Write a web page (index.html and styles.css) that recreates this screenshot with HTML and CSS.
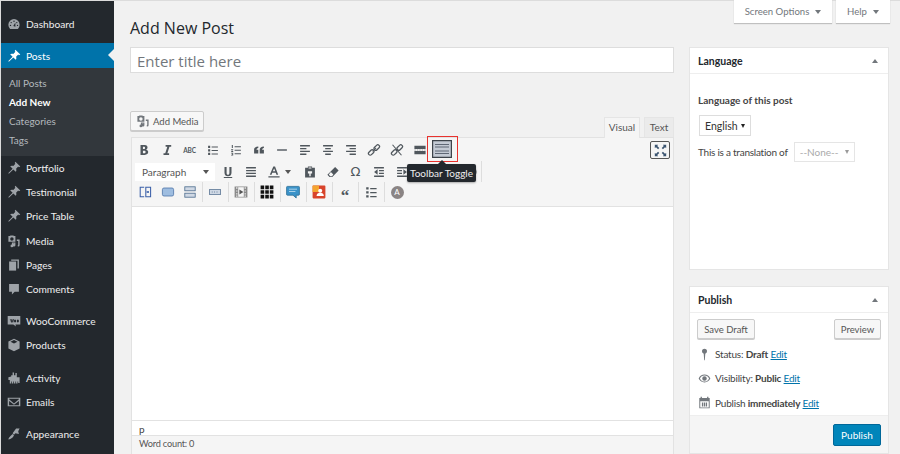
FILE: index.html
```html
<!DOCTYPE html>
<html lang="en">
<head>
<meta charset="utf-8">
<title>Add New Post</title>
<link rel="stylesheet" href="styles.css">
</head>
<body>
<div class="page">
<nav class="side">
  <a class="item first"><svg class="mi" viewBox="0 0 20 20"><path d="M10 3a8 8 0 0 0-8 8c0 2.500 1 4.500 2.500 6h11c1.500-1.500 2.500-3.500 2.500-6a8 8 0 0 0-8-8z"/><g fill="#23282d"><circle cx="6" cy="8" r="1"/><circle cx="10" cy="6" r="1"/><circle cx="14" cy="8" r="1"/><circle cx="5" cy="12" r="1"/><circle cx="15" cy="12" r="1"/><path d="M9 13l3-5 0 6z"/></g></svg>Dashboard</a>
  <a class="item active"><svg class="mi" viewBox="0 0 20 20"><path d="M12 1l7 7-2 1-1-1-3 3c.7 2 .4 3.500-.5 4.500L9 12l-6 6-1 0 0-1 6-6-3.500-3.500C5.500 6.600 7 6.300 9 7l3-3-1-1z"/></svg>Posts<span class="notch"></span></a>
  <div class="sub">
    <a>All Posts</a>
    <a class="on">Add New</a>
    <a>Categories</a>
    <a>Tags</a>
  </div>
  <a class="item"><svg class="mi" viewBox="0 0 20 20"><path d="M12 1l7 7-2 1-1-1-3 3c.7 2 .4 3.500-.5 4.500L9 12l-6 6-1 0 0-1 6-6-3.500-3.500C5.500 6.600 7 6.300 9 7l3-3-1-1z"/></svg>Portfolio</a>
  <a class="item"><svg class="mi" viewBox="0 0 20 20"><path d="M12 1l7 7-2 1-1-1-3 3c.7 2 .4 3.500-.5 4.500L9 12l-6 6-1 0 0-1 6-6-3.500-3.500C5.500 6.600 7 6.300 9 7l3-3-1-1z"/></svg>Testimonial</a>
  <a class="item"><svg class="mi" viewBox="0 0 20 20"><path d="M12 1l7 7-2 1-1-1-3 3c.7 2 .4 3.500-.5 4.500L9 12l-6 6-1 0 0-1 6-6-3.500-3.500C5.500 6.600 7 6.300 9 7l3-3-1-1z"/></svg>Price Table</a>
  <a class="item"><svg class="mi" viewBox="0 0 20 20"><path d="M2 3h2l1-1h4l1 1h2v8H2zm5 1.500a2.500 2.500 0 1 0 0 5 2.500 2.500 0 0 0 0-5z"/><path d="M14 8h4v8a2 2 0 0 1-2 2l-1-1 1-1.500V10h-2zM7 12h5v4a2 2 0 1 1-1.500-2V13.500H9V17a2 2 0 1 1-2-2z"/></svg>Media</a>
  <a class="item"><svg class="mi" viewBox="0 0 20 20"><path d="M6 2h11v13h-2V4H6z"/><path d="M3 5h10v13H3z"/></svg>Pages</a>
  <a class="item"><svg class="mi" viewBox="0 0 20 20"><path d="M3 3h14v11h-6l-4 4v-4H3z"/></svg>Comments</a>
  <a class="item gap"><svg class="mi" viewBox="0 0 20 20"><path d="M1 3h18v12H12l1 3-4-3H1z"/><path fill="#23282d" d="M4 7h1l.7 3 .8-3h1l.8 3 .7-3h1l-1.200 5h-1l-.8-2.800L7 12H6zm7.500 1a1.500 2 0 1 0 .01 0zm4 0a1.500 2 0 1 0 .01 0z"/></svg>WooCommerce</a>
  <a class="item"><svg class="mi" viewBox="0 0 20 20"><path d="M10 1l8 4v10l-8 4-8-4V5zM10 3L5 5.500 10 8l5-2.500z"/></svg>Products</a>
  <a class="item gap"><svg class="mi" viewBox="0 0 20 20"><path d="M8 2h2v4h2V3h2v6h4v8h-2v-2h-1v3h-2v-3h-1v3h-2v-3H9v3H7v-3H6v3H4v-5H2V9l4-1V6h2z"/></svg>Activity</a>
  <a class="item"><svg class="mi" viewBox="0 0 20 20"><path d="M1 4h18v12H1zm2 2l7 6 7-6v-.500H3zm0 2.500V14.500h14V8.500l-7 5.500z"/></svg>Emails</a>
  <a class="item gap"><svg class="mi" viewBox="0 0 20 20"><path d="M13 2l5 0-2 4 1 4-5-1-2 2-2-2zM8 10l2 2-2 3c-1 1-4 3-6 3 0-2 2-4 3-5z"/></svg>Appearance</a>
</nav>

<div class="work">
  <div class="tabs">
    <button class="tab">Screen Options<span class="down"></span></button>
    <button class="tab">Help<span class="down"></span></button>
  </div>
  <h1>Add New Post</h1>
  <div class="cols">
    <main class="body">
      <div class="title">Enter title here</div>
      <div class="bar">
        <button class="btn media"><svg class="ic16" viewBox="0 0 20 20"><path d="M2 3h2l1-1h4l1 1h2v8H2zm5 1.500a2.500 2.500 0 1 0 0 5 2.500 2.500 0 0 0 0-5z"/><path d="M14 8h4v8a2 2 0 0 1-2 2l-1-1 1-1.500V10h-2zM7 12h5v4a2 2 0 1 1-1.500-2V13.500H9V17a2 2 0 1 1-2-2z"/></svg>Add Media</button>
        <div class="modes"><span class="mode sel">Visual</span><span class="mode tx">Text</span></div>
      </div>
      <div class="editor">
        <div class="tools">
          <div class="row r1">
            <span class="t"><svg viewBox="0 0 20 20"><path d="M5 3h6c3 0 4 1.500 4 3.500 0 1.500-.8 2.500-2 3 1.700.4 3 1.500 3 3.500 0 2.500-2 4-5 4H5zm3.500 2.500v3H10c1 0 1.500-.6 1.500-1.500S11 5.500 10 5.500zm0 5.500v3.500h2c1 0 1.800-.6 1.800-1.800S11.500 11 10.500 11z"/></svg></span>
            <span class="t"><svg viewBox="0 0 20 20"><path d="M8 3h8v2.500h-2.500L10.500 14.500H13V17H5v-2.500h2.500L10.500 5.500H8z"/></svg></span>
            <span class="t"><span class="abc">ABC</span></span>
            <span class="t"><svg viewBox="0 0 20 20"><path d="M3 4h3v3H3zm5 1h9v1.500H8zM3 9h3v3H3zm5 1h9v1.500H8zM3 14h3v3H3zm5 1h9v1.500H8z"/></svg></span>
            <span class="t"><svg viewBox="0 0 20 20"><path d="M4 3h1.500v4H4zm4 1.500h9V6H8zM3 9h3v1l-2 1.500h2V13H3v-1l2-1.500H3zm5 .500h9V11H8zM3 14h3v4H3v-1h1.700v-.500H3.500v-.700h1.200V15H3zm5 .500h9V16H8z"/></svg></span>
            <span class="t"><svg viewBox="0 0 20 20"><path d="M9 5v2c-2 .5-2.500 1.500-2.500 2.500H9V15H3V9.500C3 7 5 5.300 9 5zm8 0v2c-2 .5-2.500 1.500-2.500 2.500H17V15h-6V9.500C11 7 13 5.300 17 5z"/></svg></span>
            <span class="t"><svg viewBox="0 0 20 20"><path d="M3 9h14v2H3z"/></svg></span>
            <span class="t"><svg viewBox="0 0 20 20"><path d="M3 3h14v2H3zm0 4h9v2H3zm0 4h14v2H3zm0 4h9v2H3z"/></svg></span>
            <span class="t"><svg viewBox="0 0 20 20"><path d="M3 3h14v2H3zm3 4h8v2H6zm-3 4h14v2H3zm3 4h8v2H6z"/></svg></span>
            <span class="t"><svg viewBox="0 0 20 20"><path d="M3 3h14v2H3zm5 4h9v2H8zm-5 4h14v2H3zm5 4h9v2H8z"/></svg></span>
            <span class="t"><svg viewBox="0 0 20 20"><g class="line"><rect x="1.500" y="11" width="9" height="5" rx="2.500" transform="rotate(-45 6 13.500)"/><rect x="9.500" y="4" width="9" height="5" rx="2.500" transform="rotate(-45 14 6.500)"/></g><path d="M7.500 11.500l5-5 1 1-5 5z"/></svg></span>
            <span class="t"><svg viewBox="0 0 20 20"><g class="line"><rect x="1.500" y="11" width="9" height="5" rx="2.500" transform="rotate(-45 6 13.500)"/><rect x="9.500" y="4" width="9" height="5" rx="2.500" transform="rotate(-45 14 6.500)"/></g><path d="M3 3l1.200-1 12.800 15-1.200 1z"/></svg></span>
            <span class="t"><svg viewBox="0 0 20 20"><path d="M2 4h16v4.500H2zm0 7.500h16V16H2zM2 9.500h2v1H2zm3.500 0h2v1h-2zm3.500 0h2v1H9zm3.500 0h2v1h-2zm3.500 0h2v1h-2z"/></svg></span>
            <span class="t toggle"><span class="hot"><svg viewBox="0 0 20 18"><path fill="#c3cad4" d="M1 1h18v16H1z"/><path d="M0 0h20v18H0zm1.200 1.200v15.600h17.600V1.200z" fill-rule="evenodd"/><path fill="#5e6775" d="M3 4h14v1H3zm0 2.500h14v1H3zm0 4h14v1H3zm0 2.500h14v1H3z"/></svg></span></span>
            <span class="fs"><svg viewBox="0 0 16 16"><path d="M1 1h4L4 2.500 6.500 5 5 6.500 2.500 4 1 5zm14 0v4l-1.500-1L11 6.500 9.500 5 12 2.500 11 1zM1 15v-4l1.500 1L5 9.500 6.500 11 4 13.500 5 15zm14 0h-4l1-1.500L9.500 11 11 9.500l2.500 2.500L15 11z"/></svg></span>
          </div>
          <div class="row r2">
            <span class="fmt">Paragraph<span class="dn"></span></span>
            <span class="t"><svg viewBox="0 0 20 20"><path d="M5 3h3v8c0 2 .8 3 2 3s2-1 2-3V3h3v8c0 3.500-2 5-5 5s-5-1.500-5-5zM4 17h12v1.500H4z"/></svg></span>
            <span class="t"><svg viewBox="0 0 20 20"><path d="M3 3h14v2H3zm0 4h14v2H3zm0 4h14v2H3zm0 4h14v2H3z"/></svg></span>
            <span class="t"><svg viewBox="0 0 20 20"><path d="M9 2h2.500L16 14h-2.500l-1-3h-5l-1 3H4zm1.200 3L8.300 9h3.500zM2 16h16v2H2z"/></svg></span>
            <span class="caret"><span class="dn"></span></span>
            <span class="t"><svg viewBox="0 0 20 20"><path d="M3 4h4V2h6v2h4v14H3zm5 1h4V3.500H8zM7 9v3h2v4h2v-4h2V9z"/></svg></span>
            <span class="t"><svg viewBox="0 0 20 20"><path d="M13 3l5 5-9 9H5l-3-3zm-6 7l-3 3.500L6 16h2.500l2-2.500z" fill-rule="evenodd"/></svg></span>
            <span class="t"><span class="om">Ω</span></span>
            <span class="t"><svg viewBox="0 0 20 20"><path d="M3 3h14v2H3zm7 4h7v2h-7zm0 4h7v2h-7zM3 15h14v2H3zM8 6v8l-5-4z"/></svg></span>
            <span class="t"><svg viewBox="0 0 20 20"><path d="M3 3h14v2H3zm0 4h7v2H3zm0 4h7v2H3zm0 4h14v2H3zM12 6v8l5-4z"/></svg></span>
            <span class="t"><svg viewBox="0 0 20 20"><path d="M8 3v3c5 0 9 2 9 9-2-3-5-4-9-4v3L2 8.500z"/></svg></span>
            <span class="t"><svg viewBox="0 0 20 20"><path d="M12 3v3c-5 0-9 2-9 9 2-3 5-4 9-4v3l6-5.500z"/></svg></span>
            <span class="t"><svg viewBox="0 0 20 20"><path d="M10 2a8 8 0 1 0 0 16 8 8 0 0 0 0-16zm-1 11h2v2H9zm1-8c2 0 3.500 1.200 3.500 3 0 2.300-2.500 2.300-2.500 4H9c0-2.700 2.300-2.700 2.300-4 0-.6-.5-1-1.300-1s-1.300.4-1.300 1.200H6.500C6.500 6.200 8 5 10 5z"/></svg></span>
            <span class="rule"></span>
          </div>
          <div class="row r3">
            <span class="t n"><svg viewBox="0 0 20 20"><path fill="none" stroke="#3a5fa8" stroke-width="1.300" d="M9 4H4v12h5M11 4h6v12h-6z"/><path fill="#3a5fa8" d="M12 9h3v2h-3z"/></svg></span>
            <span class="t n"><svg viewBox="0 0 20 20"><rect x="3" y="5" width="14" height="10" rx="2" fill="#9ebde0" stroke="#4d73a8"/></svg></span>
            <span class="t n"><svg viewBox="0 0 20 20"><g fill="#cfd8e4" stroke="#4a6a8c"><rect x="3.500" y="3.500" width="13" height="5"/><rect x="3.500" y="11.500" width="13" height="5"/></g></svg></span>
            <span class="rule"></span>
            <span class="t"><svg viewBox="0 0 20 20"><rect x="3" y="7" width="14" height="6" fill="#cfd8e4" stroke="#5a7594"/><path fill="#5a7594" d="M6 9.500h1v1H6zm3 0h1v1H9zm3 0h1v1h-1z"/></svg></span>
            <span class="rule"></span>
            <span class="t"><svg viewBox="0 0 20 20"><path fill="#8a8a8a" d="M2 3h16v14H2zm2 1v2h1.500V4zm0 4v1.500h1.500V8zm0 3.500V13h1.500v-1.500zM4 14.500V16h1.500v-1.500zM14.500 4v2H16V4zm0 4v1.500H16V8zm0 3.500V13H16v-1.500zm0 3V16H16v-1.500z" fill-rule="evenodd"/><path fill="#f5f5f5" d="M6.500 4h7v12h-7z"/><path fill="#555" d="M8 7l5 3-5 3z"/></svg></span>
            <span class="rule"></span>
            <span class="t"><svg viewBox="0 0 20 20" class="grid"><path d="M2 2h4.500v4.500H2zm5.800 0h4.500v4.500H7.800zm5.700 0H18v4.500h-4.500zM2 7.800h4.500v4.500H2zm5.800 0h4.500v4.500H7.800zm5.700 0H18v4.500h-4.500zM2 13.500h4.500V18H2zm5.800 0h4.500V18H7.800zm5.700 0H18V18h-4.500z"/></svg></span>
            <span class="rule"></span>
            <span class="t"><svg viewBox="0 0 20 20"><path fill="#3b93c9" stroke="#2a6d96" d="M3 3h14a1 1 0 0 1 1 1v9a1 1 0 0 1-1 1h-3v3.500L10 14H3a1 1 0 0 1-1-1V4a1 1 0 0 1 1-1z"/><path fill="#cfe6f4" d="M5 6h10v1H5zm0 3h8v1H5z"/></svg></span>
            <span class="rule"></span>
            <span class="t"><svg viewBox="0 0 20 20"><rect x="2" y="2" width="16" height="16" rx="1" fill="#d8442b"/><path fill="#f4a52f" d="M2 2h8v8H2z"/><circle cx="11.500" cy="8.500" r="2.500" fill="#fff"/><path fill="#fff" d="M7 15c0-3 2-4 4.500-4s4.500 1 4.500 4z"/></svg></span>
            <span class="rule"></span>
            <span class="t"><span class="quo">“</span></span>
            <span class="rule"></span>
            <span class="t"><svg viewBox="0 0 20 20"><path d="M4 4h3v3H4zm5 1h8v1.500H9zM4 9h3v3H4zm5 1h8v1.500H9zM4 14h3v3H4zm5 1h8v1.500H9z"/></svg></span>
            <span class="rule"></span>
            <span class="t"><span class="disc">A</span></span>
          </div>
          <div class="tip">Toolbar Toggle</div>
        </div>
        <div class="content"></div>
        <div class="path">p</div>
        <div class="count">Word count: 0</div>
      </div>
    </main>
    <aside class="right">
      <section class="box lang">
        <header class="boxh">Language<span class="up"></span></header>
        <div class="langb">
          <div class="ll">Language of this post</div>
          <div class="sel1">English<span class="dn2"></span></div>
          <div class="tr">This is a translation of<span class="sel2">--None--<span class="dn3"></span></span></div>
        </div>
      </section>
      <section class="box pub">
        <header class="boxh">Publish<span class="up"></span></header>
        <div class="pubb">
          <div class="acts"><button class="btn">Save Draft</button><button class="btn">Preview</button></div>
          <div class="meta"><svg class="mt" viewBox="0 0 20 20"><path d="M10 1a4 4 0 0 1 1.200 7.800L10.500 19h-1L8.800 8.800A4 4 0 0 1 10 1z"/></svg><span>Status: <b>Draft</b> <a>Edit</a></span></div>
          <div class="meta"><svg class="mt" viewBox="0 0 20 20"><path d="M10 4c4 0 7.500 2.500 9 6-1.500 3.500-5 6-9 6s-7.500-2.500-9-6c1.500-3.500 5-6 9-6zm0 1.500A7.500 7.500 0 0 0 3 10a7.500 7.500 0 0 0 14 0 7.500 7.500 0 0 0-7-4.500zM10 6.500a3.500 3.500 0 1 1 0 7 3.500 3.500 0 0 1 0-7z" fill-rule="evenodd"/></svg><span>Visibility: <b>Public</b> <a>Edit</a></span></div>
          <div class="meta"><svg class="mt" viewBox="0 0 20 20"><path d="M2 3h2V1h2v2h8V1h2v2h2v16H2zm1.500 5v9.500h13V8zM6 10h2v6H6zm3 0h2v6h-2zm3 0h2v6h-2z" fill-rule="evenodd"/></svg><span>Publish <b>immediately</b> <a>Edit</a></span></div>
        </div>
        <footer class="pubf"><button class="go">Publish</button></footer>
      </section>
    </aside>
  </div>
</div>
</div>
</body>
</html>
```
FILE: styles.css
```css
* { box-sizing: border-box; }
html, body { margin: 0; height: 454px; overflow: hidden; }
body { background: #f1f1f1; font-family: "Lato", "Open Sans", sans-serif; font-size: 10.5px; color: #444; }
.page { display: flex; height: 454px; border-top: 1px solid #dcdcdc; border-left: 1px solid #dcdcdc; }
svg { fill: currentColor; display: block; }

.side { width: 113px; flex: none; background: #23282d; color: #eee; font-size: 10.200px; }
.item { display: flex; align-items: center; height: 24.2px; padding-left: 6px; position: relative; }
.item.first { height: 42px; padding-top: 3px; }
.item.active { background: #0073aa; color: #fff; height: 25px; }
.item.gap { margin-top: 8px; }
.mi { width: 14px; height: 14px; margin-right: 5px; color: #9ea3a8; flex: none; }
.active .mi { color: #fff; }
.notch { position: absolute; right: 0; top: 6px; border: 6px solid transparent; border-right-color: #f1f1f1; border-left-width: 0; }
.sub { background: #32373c; padding: 5.500px 0 0; height: 88px; }
.sub a { display: flex; align-items: center; height: 19px; padding-left: 8px; color: #b4b9be; font-size: 10px; }
.sub .on { color: #fff; font-weight: 700; }

.work { flex: 1; display: flex; flex-direction: column; padding: 0 10px 0 16px; min-width: 0; }
.tabs { display: flex; justify-content: flex-end; gap: 4px; height: 22px; margin-top: -1px; margin-bottom: -6px; flex: none; }
.tab { height: 23px; background: #fff; border: 0; box-shadow: 0 1px 1px rgba(0,0,0,.2); font: inherit; font-size: 9.600px; color: #72777c; padding: 0; display: flex; align-items: center; justify-content: center; }
.tab:first-child { width: 98px; }
.tab:last-child { width: 54px; }
.down { border: 3.500px solid transparent; border-top: 4px solid #72777c; border-bottom: 0; margin-left: 6px; }
h1 { margin: 0 0 7px; font-family: "Open Sans", sans-serif; font-size: 16px; font-weight: 400; color: #23282d; height: 24px; line-height: 24px; flex: none; }
.cols { display: flex; gap: 15px; flex: 1; min-height: 0; }
.body { width: 544px; flex: none; display: flex; flex-direction: column; }
.right { width: 200px; flex: none; }
.title { height: 26px; background: #fff; border: 1px solid #ddd; font-family: "Open Sans", sans-serif; font-size: 15px; line-height: 26px; padding-left: 6px; color: #72777c; flex: none; }
.bar { display: flex; justify-content: space-between; align-items: flex-end; height: 64px; flex: none; }
.btn { font: inherit; font-size: 9.500px; height: 20px; background: #f7f7f7; border: 1px solid #ccc; border-radius: 2px; box-shadow: 0 1px 0 #ccc; color: #555; padding: 0 7px; display: flex; align-items: center; white-space: nowrap; }
.media { margin-bottom: 6px; padding: 0 5px; width: 74px; }
.ic16 { width: 14px; height: 14px; margin-right: 3px; color: #72777c; flex: none; }
.modes { display: flex; gap: 4px; }
.mode { width: 36px; height: 20px; line-height: 19px; text-align: center; background: #ebebeb; border: 1px solid #e5e5e5; border-bottom: 0; font-size: 10px; color: #555; }
.mode.tx { width: 30px; }
.mode.sel { background: #f5f5f5; margin-bottom: -1px; height: 21px; position: relative; z-index: 1; }
.editor { flex: 1; display: flex; flex-direction: column; border: 1px solid #e2e2e2; border-bottom: 0; min-height: 0; margin-left: 1px; width: 543px; }
.tools { background: #f5f5f5; height: 69px; flex: none; position: relative; padding-top: 1px; border-bottom: 1px solid #e2e2e2; }
.row { display: flex; align-items: center; height: 22px; color: #555; }
.r2 { height: 21px; }
.r3 { height: 20px; padding-left: 2px; }
.t { width: 23px; height: 20px; flex: none; display: flex; align-items: center; justify-content: center; color: #50575d; }
.t svg { width: 14px; height: 14px; }
.abc { font-size: 6.500px; font-weight: 700; letter-spacing: -.2px; }
.om { font-size: 13px; font-family: "DejaVu Sans", sans-serif; }
.quo { font-size: 17px; line-height: 17px; margin-top: 7px; font-weight: 700; font-family: "Liberation Serif", serif; }
.disc { width: 13px; height: 13px; border-radius: 50%; background: #8a8484; color: #fff; font-size: 8px; line-height: 13px; text-align: center; }
.toggle { position: relative; }
.hot { width: 31px; height: 26px; margin-top: -2px; padding: 0 1px 0 0; border: 1px solid #e8322e; display: flex; align-items: center; justify-content: center; flex: none; }
.t .hot svg { width: 20px; height: 18px; color: #3c434a; }
.fs { margin-left: auto; margin-right: 3px; width: 20px; height: 18px; border: 1px solid #555; border-radius: 2px; display: flex; align-items: center; justify-content: center; color: #3b5470; }
.fs svg { width: 13px; height: 13px; }
.fmt { width: 80px; height: 18px; margin-left: 3px; margin-right: 1px; background: #fff; display: flex; align-items: center; justify-content: space-between; padding: 0 6px 0 7px; font-size: 10px; color: #555; flex: none; }
.dn { border: 3px solid transparent; border-top: 4px solid #555; border-bottom: 0; display: block; }
.caret { width: 10px; flex: none; display: flex; justify-content: center; margin-left: -2px; margin-right: 5px; }
.rule { width: 1px; height: 20px; background: #ddd; flex: none; }
.r2 .rule { margin-left: -1px; height: 21px; }
.r3 .t { width: 25px; }
.r3 .t.n { width: 22.500px; }
.r3 .t svg { width: 16px; height: 16px; }
.tip { position: absolute; left: 275px; top: 26px; width: 69px; height: 18px; background: #23282d; color: #eee; font-size: 10px; text-align: center; line-height: 18px; border-radius: 2px; box-shadow: 0 1px 2px rgba(0,0,0,.3); white-space: nowrap; z-index: 2; }
.tip::before { content: ""; position: absolute; left: 31px; top: -4px; border: 4px solid transparent; border-bottom-color: #23282d; border-top: 0; }
.grid { color: #111; }
.content { flex: 1; background: #fff; min-height: 0; }
.path { height: 15px; background: #fff; border-top: 1px solid #e2e2e2; flex: none; font-size: 10px; padding-left: 7px; line-height: 16px; }
.count { height: 19px; background: #f5f5f5; border-top: 1px solid #e2e2e2; flex: none; font-size: 9.200px; letter-spacing: -.2px; padding-left: 7px; line-height: 16px; color: #555; }

.box { background: #fff; border: 1px solid #e5e5e5; }
.boxh { height: 26px; border-bottom: 1px solid #eee; font-size: 10.500px; font-weight: 700; color: #23282d; padding: 0 8px; display: flex; align-items: center; justify-content: space-between; }
.up { border: 3px solid transparent; border-bottom: 4px solid #72777c; border-top: 0; margin-right: 2px; }
.lang { height: 223px; margin-bottom: 16px; }
.langb { padding: 20px 8px 0 8px; }
.ll { font-weight: 700; font-size: 10px; color: #444; height: 16px; line-height: 13px; }
.sel1 { width: 52px; height: 21px; margin-top: 5px; margin-left: 1px; border: 1px solid #ddd; font-size: 10.500px; display: flex; align-items: center; justify-content: space-between; padding: 0 5px; color: #333; }
.dn2 { border: 2.500px solid transparent; border-top: 4px solid #222; border-bottom: 0; }
.tr { display: flex; align-items: center; font-size: 10px; letter-spacing: -.25px; margin-top: 6px; height: 20px; }
.sel2 { width: 61px; height: 20px; margin-left: 6px; border: 1px solid #e5e5e5; color: #aaa; padding: 0 5px; display: flex; align-items: center; justify-content: space-between; letter-spacing: 0; }
.dn3 { border: 2.500px solid transparent; border-top: 4px solid #999; border-bottom: 0; }
.pub { height: 168px; display: flex; flex-direction: column; }
.pubb { flex: 1; padding: 6px 7px 0 7px; }
.acts { display: flex; justify-content: space-between; margin-bottom: 3px; }
.acts .btn { width: 58px; justify-content: center; padding: 0; }
.acts .btn:last-child { width: 47px; }
.meta { display: flex; align-items: center; height: 24.300px; white-space: pre; font-size: 10px; letter-spacing: -.2px; color: #444; padding-left: 1px; }
.mt { width: 13px; height: 13px; margin-right: 4px; color: #72777c; flex: none; }
.meta b { font-weight: 700; }
.meta a { color: #0073aa; text-decoration: underline; }
.pubf { height: 38px; background: #f5f5f5; border-top: 1px solid #eee; display: flex; justify-content: flex-end; align-items: center; padding-right: 7px; }
.go { width: 48px; height: 22px; background: #0085ba; border: 1px solid #006799; border-radius: 2px; color: #fff; font: inherit; font-size: 10px; padding: 0; }
.line { fill: none; stroke: currentColor; stroke-width: 1.800; }
```
